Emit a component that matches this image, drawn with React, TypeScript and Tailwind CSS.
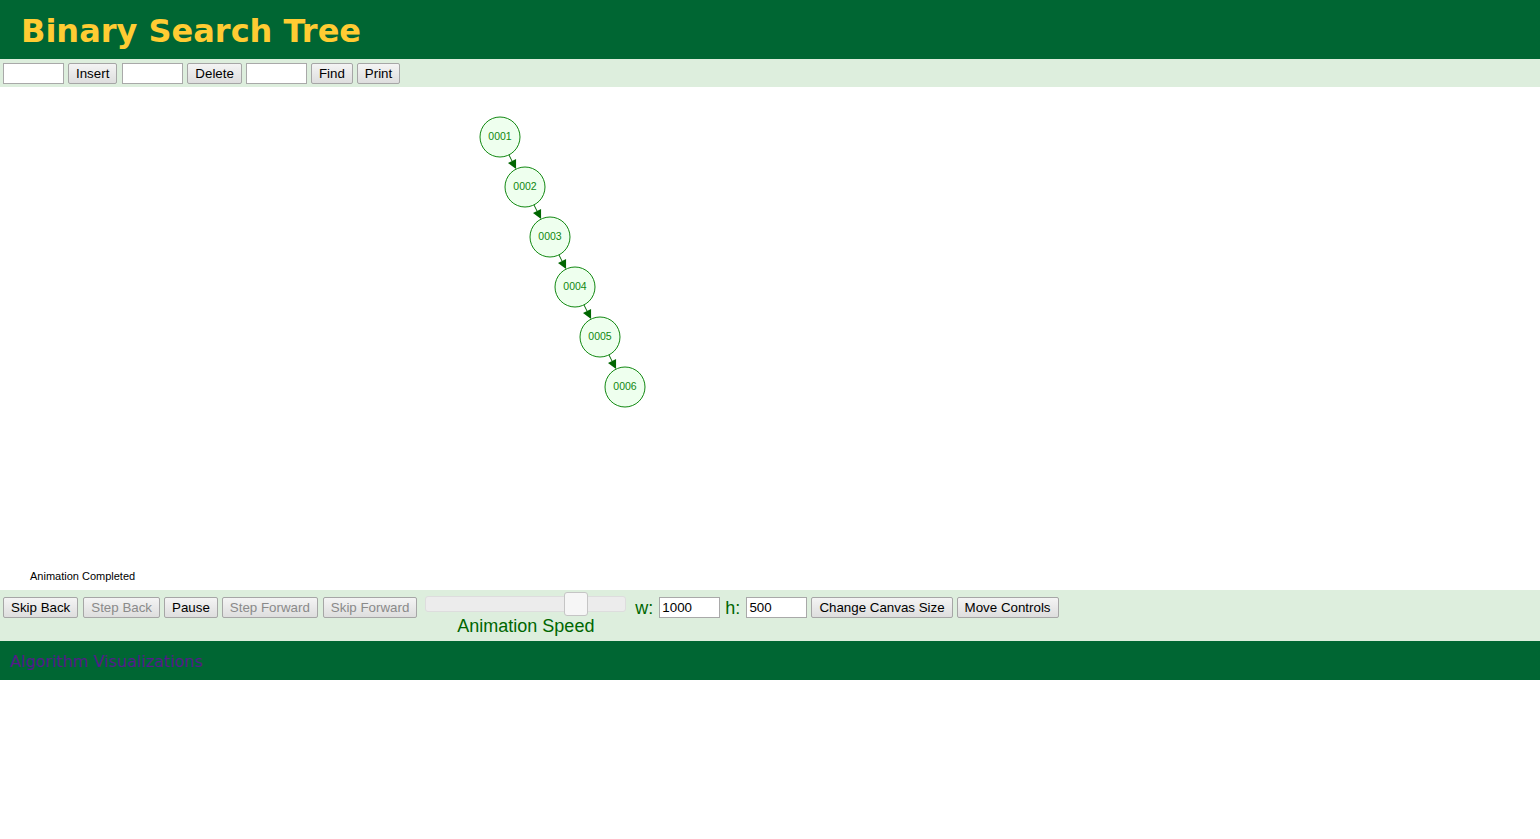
import React from 'react';

const NODES = [
  { label: '0001', x: 500, y: 137 },
  { label: '0002', x: 525, y: 187 },
  { label: '0003', x: 550, y: 237 },
  { label: '0004', x: 575, y: 287 },
  { label: '0005', x: 600, y: 337 },
  { label: '0006', x: 625, y: 387 },
];

const R = 20;
const CANVAS_TOP = 87;

const btn =
  'h-[21px] px-[7px] border border-[#a6a6a6] rounded-[2px] bg-gradient-to-b from-[#f4f4f4] to-[#dedede] text-[13.33px] leading-none font-["Liberation_Sans",Arial,sans-serif] whitespace-nowrap shrink-0';

const Btn: React.FC<{ label: string; disabled?: boolean; className?: string }> = ({ label, disabled, className = '' }) => (
  <button className={`${btn} ${disabled ? 'text-[#8a8a8a]' : 'text-black'} ${className}`}>{label}</button>
);

const TextBox: React.FC<{ value?: string; className?: string }> = ({ value = '', className = '' }) => (
  <input
    readOnly
    value={value}
    className={`w-[61px] h-[21px] px-[2px] bg-white border border-[#a9a9a9] text-[13.33px] font-["Liberation_Sans",Arial,sans-serif] text-black outline-none shrink-0 ${className}`}
  />
);

function Tree() {
  const edges = NODES.slice(1).map((n, i) => {
    const p = NODES[i];
    const dx = n.x - p.x;
    const dy = n.y - p.y;
    const len = Math.hypot(dx, dy);
    const ux = dx / len;
    const uy = dy / len;
    const sx = p.x + ux * R;
    const sy = p.y + uy * R - CANVAS_TOP;
    const ex = n.x - ux * R;
    const ey = n.y - uy * R - CANVAS_TOP;
    const bx = ex - ux * 9;
    const by = ey - uy * 9;
    const tri = `${ex},${ey} ${bx - uy * 4.5},${by + ux * 4.5} ${bx + uy * 4.5},${by - ux * 4.5}`;
    return (
      <g key={n.label}>
        <line x1={sx} y1={sy} x2={bx} y2={by} stroke="#006600" strokeWidth={1} />
        <polygon points={tri} fill="#006600" />
      </g>
    );
  });

  return (
    <svg width={1000} height={503} className="block">
      {edges}
      {NODES.map((n) => (
        <g key={n.label}>
          <circle cx={n.x} cy={n.y - CANVAS_TOP} r={R} fill="#eeffee" stroke="#118811" strokeWidth={1} />
          <text
            x={n.x}
            y={n.y - CANVAS_TOP + 3}
            textAnchor="middle"
            fontSize={10.5}
            fill="#118811"
            fontFamily="'Liberation Sans', Arial, sans-serif"
          >
            {n.label}
          </text>
        </g>
      ))}
      <text x={30} y={493} fontSize={11} fill="#000" fontFamily="'Liberation Sans', Arial, sans-serif">
        Animation Completed
      </text>
    </svg>
  );
}

export default function App() {
  return (
    <div className="w-[1540px] min-h-[839px] bg-white">
      {/* Header */}
      <div className="h-[59px] bg-[#006633] pl-[21px] pt-[7px]">
        <h1 className='text-[32px] leading-normal font-bold text-[#ffcc33] font-["DejaVu_Sans",Verdana,sans-serif]'>
          Binary Search Tree
        </h1>
      </div>

      {/* Algorithm controls */}
      <div className="h-[28px] bg-[#ddeedd] flex items-center pl-[3px] pt-[1px]">
        <TextBox />
        <Btn label="Insert" className="ml-[4px]" />
        <TextBox className="ml-[5px]" />
        <Btn label="Delete" className="ml-[4px]" />
        <TextBox className="ml-[4px]" />
        <Btn label="Find" className="ml-[4px]" />
        <Btn label="Print" className="ml-[4px]" />
      </div>

      {/* Canvas */}
      <div className="h-[503px] bg-white">
        <Tree />
      </div>

      {/* Animation controls */}
      <div className='h-[51px] bg-[#ddeedd] flex items-start pl-[3px] pt-[7px] font-["Liberation_Sans",Arial,sans-serif]'>
        <Btn label="Skip Back" />
        <Btn label="Step Back" disabled className="ml-[5px]" />
        <Btn label="Pause" className="ml-[4px]" />
        <Btn label="Step Forward" disabled className="ml-[4px]" />
        <Btn label="Skip Forward" disabled className="ml-[5px]" />

        <div className="ml-[8px] w-[201px] flex flex-col items-center -mt-[1px] shrink-0">
          <div className="relative w-[201px] h-[16px] bg-[#ececec] border border-[#dddddd] rounded-[3px]">
            <div className="absolute left-[138px] -top-[5px] w-[24px] h-[24px] bg-[#f6f6f6] border border-[#c5c5c5] rounded-[3px]" />
          </div>
          <div className="mt-[1px] text-[18px] leading-normal text-[#006600] whitespace-nowrap">Animation Speed</div>
        </div>

        <span className="ml-[9px] h-[21px] flex items-center text-[18px] text-[#006600] leading-none">w:</span>
        <TextBox value="1000" className="ml-[6px]" />
        <span className="ml-[5px] h-[21px] flex items-center text-[18px] text-[#006600] leading-none">h:</span>
        <TextBox value="500" className="ml-[6px]" />
        <Btn label="Change Canvas Size" className="ml-[4px]" />
        <Btn label="Move Controls" className="ml-[4px]" />
      </div>

      {/* Footer */}
      <div className="h-[39px] bg-[#006633] pl-[10px] pt-[8px]">
        <a className='text-[16px] leading-normal text-[#551a8b] font-["DejaVu_Sans",Verdana,sans-serif]'>
          Algorithm Visualizations
        </a>
      </div>
    </div>
  );
}
